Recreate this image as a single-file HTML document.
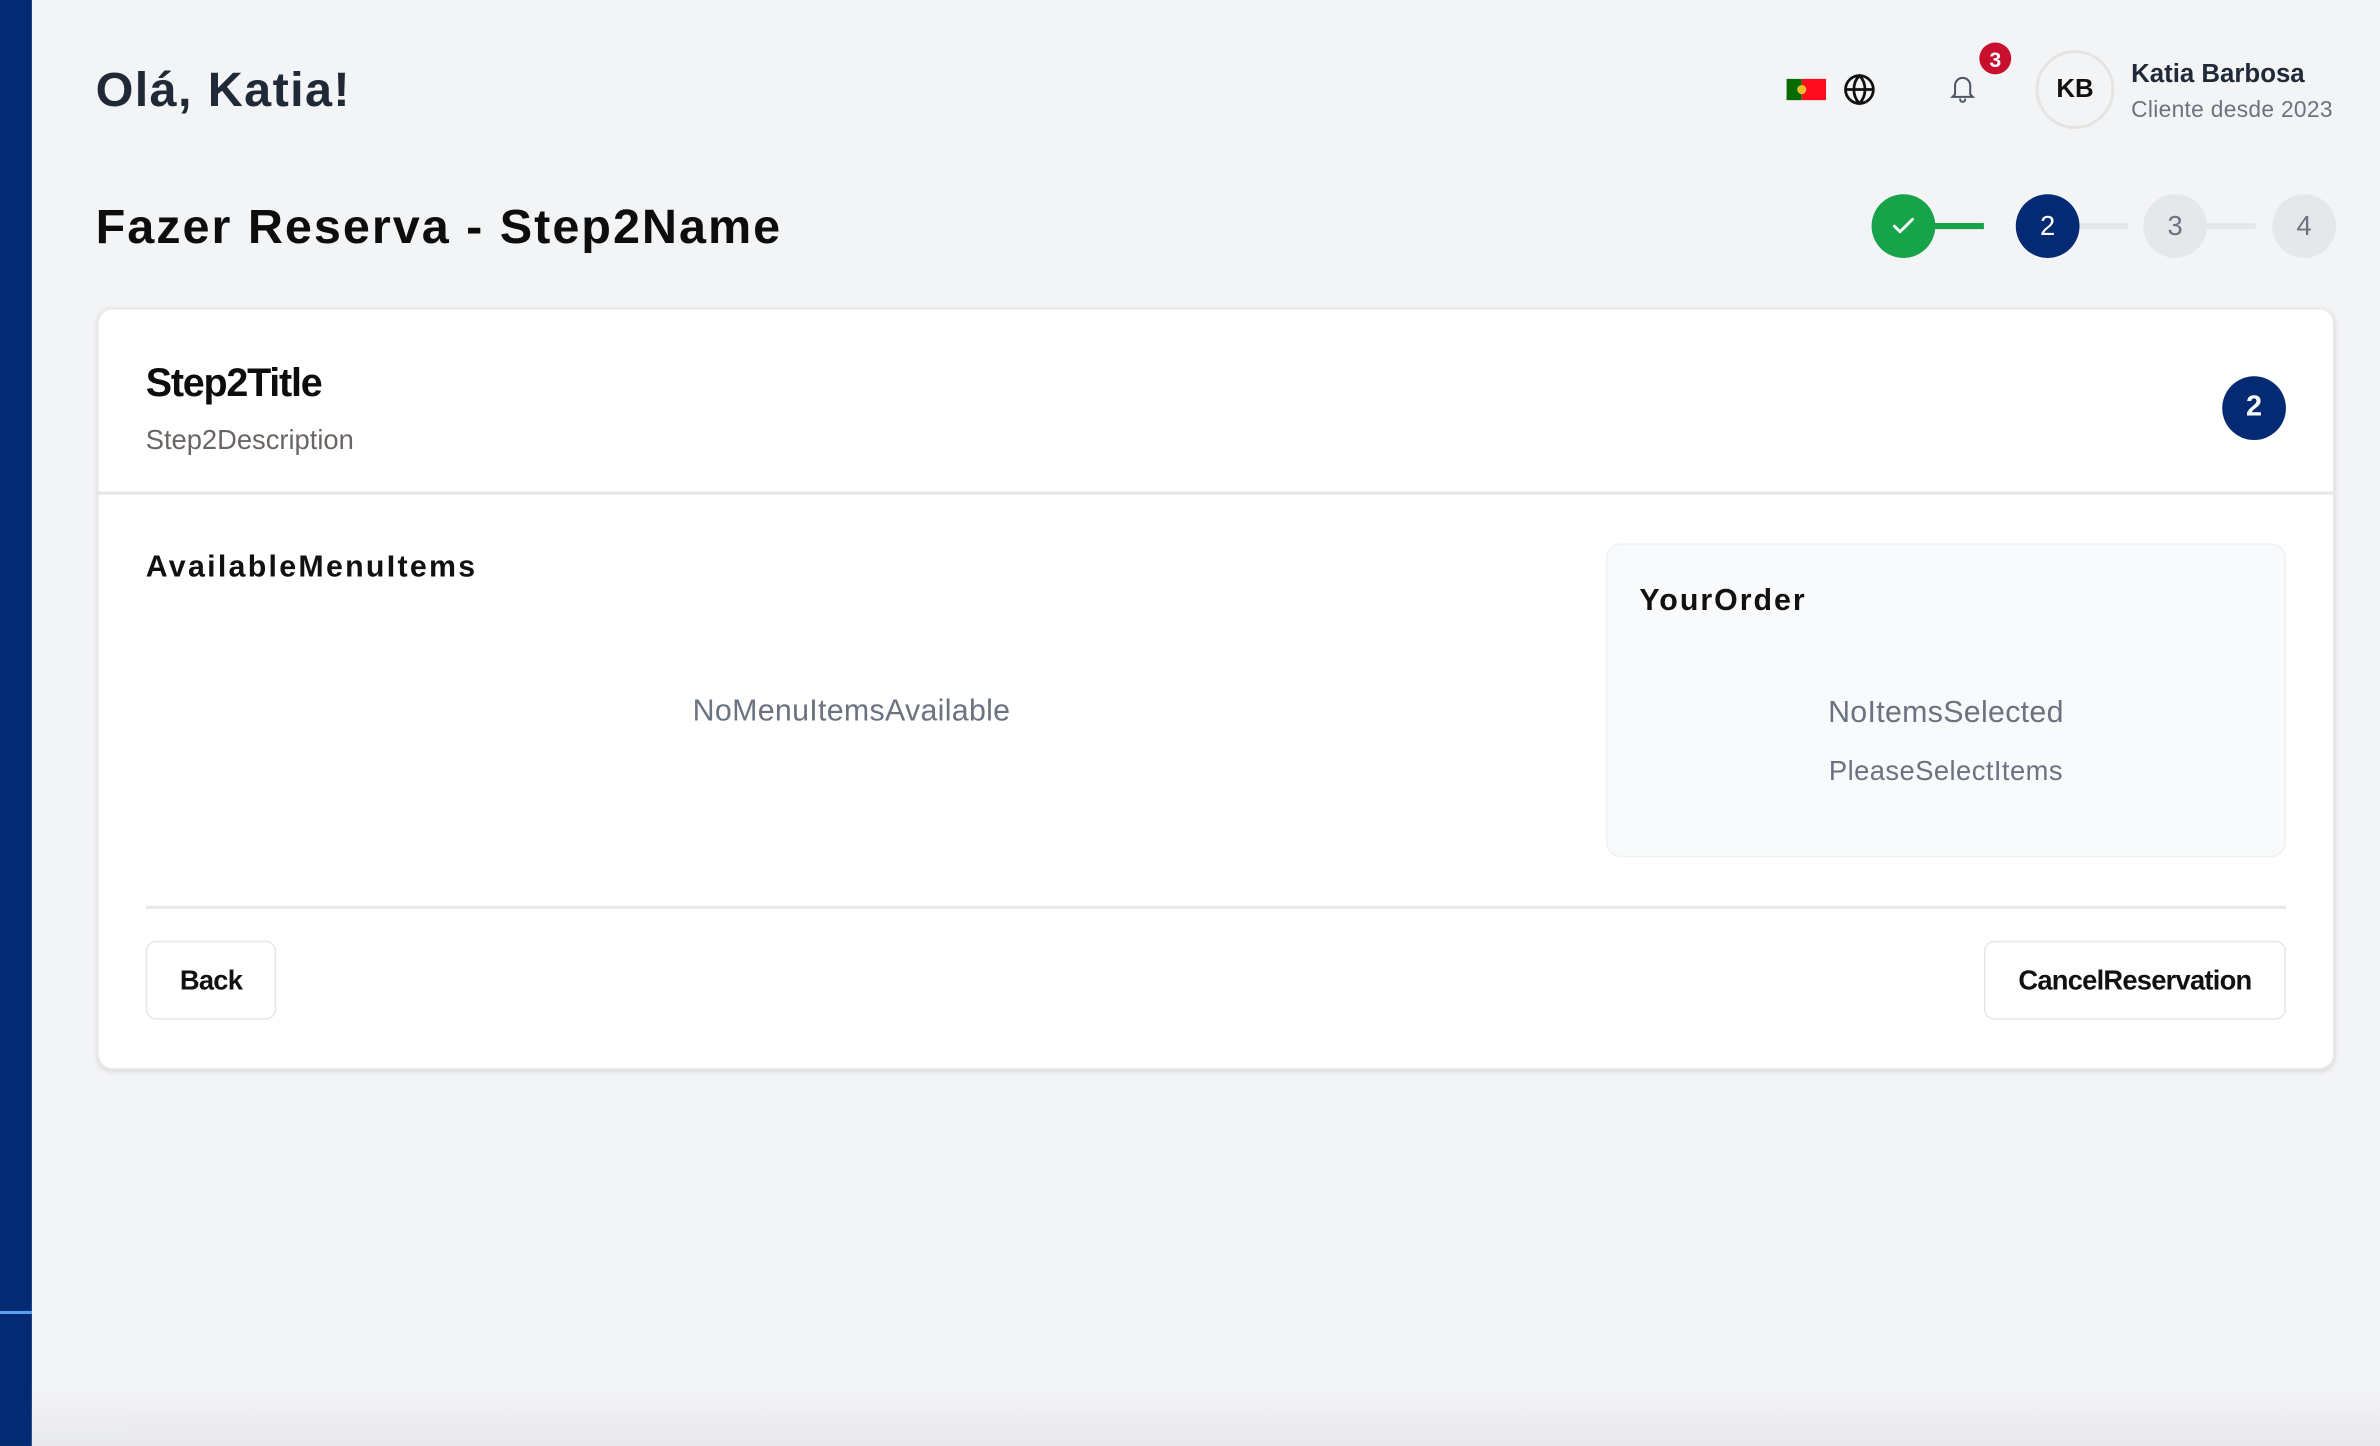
<!DOCTYPE html>
<html><head><meta charset="utf-8"><style>
html,body{margin:0;padding:0;width:2380px;height:1446px;overflow:hidden;background:#f3f4f6;}
#w{position:absolute;left:0;top:0;width:1568px;height:953px;transform:scale(1.5179,1.5173);transform-origin:0 0;font-family:"Liberation Sans",Arial,sans-serif;}
.a{position:absolute;}
.sb{left:0;top:0;width:21px;height:953px;background:#032a73;}
.t{white-space:nowrap;}
.circ{position:absolute;border-radius:50%;display:flex;align-items:center;justify-content:center;}
.btn{position:absolute;background:#fff;border:1.5px solid #e5e7eb;border-radius:7px;display:flex;align-items:center;justify-content:center;font-size:18px;font-weight:bold;color:#111;box-sizing:border-box;letter-spacing:-0.5px}
</style></head><body><div id="w">
<div class="a sb"></div>
<div class="a" style="left:0;top:864px;width:21px;height:2px;background:#5aa2f0"></div>
<div class="a" style="left:21px;top:915px;width:1547px;height:38px;background:linear-gradient(#f3f4f600,#e7e8ea)"></div>

<div class="a t" style="left:63px;top:41px;font-size:32px;font-weight:bold;color:#1f2937;letter-spacing:0.9px">Olá, Katia!</div>

<!-- flag -->
<div class="a" style="left:1177px;top:52px;width:10px;height:14px;background:#066b00"></div>
<div class="a" style="left:1187px;top:52px;width:16px;height:14px;background:#ff0c1f"></div>
<div class="a" style="left:1184px;top:56px;width:6px;height:6px;border-radius:50%;background:#e9c02a"></div>
<svg class="a" style="left:1214px;top:48px" width="22" height="22" viewBox="0 0 24 24" fill="none" stroke="#111" stroke-width="2"><circle cx="12" cy="12" r="10"/><path d="M2 12h20M12 2c3 3 4 6.5 4 10s-1 7-4 10c-3-3-4-6.5-4-10s1-7 4-10z"/></svg>
<svg class="a" style="left:1283px;top:47px" width="20" height="22" viewBox="0 0 24 24" fill="none" stroke="#4b5563" stroke-width="1.6" stroke-linecap="round"><path d="M6 17V10a6 6 0 0 1 12 0v7l2 2H4l2-2z"/><path d="M10 21a2 2 0 0 0 4 0"/></svg>
<div class="circ" style="left:1304px;top:28px;width:21px;height:21px;background:#c8102e;color:#fff;font-size:14px;font-weight:bold">3</div>
<div class="circ" style="left:1341px;top:33px;width:48px;height:48px;border:2px solid #e6e4e1;font-weight:bold;font-size:17px;color:#111">KB</div>
<div class="a t" style="left:1404px;top:39px;font-size:17px;color:#1f2937;font-weight:bold;letter-spacing:0px">Katia Barbosa</div>
<div class="a t" style="left:1404px;top:64px;font-size:15px;color:#6b7280;letter-spacing:0.2px">Cliente desde 2023</div>

<div class="a t" style="left:63px;top:131px;font-size:32px;font-weight:bold;color:#0d0d0d;letter-spacing:1.3px">Fazer Reserva - Step2Name</div>

<!-- stepper -->
<div class="a" style="left:1270px;top:147px;width:37px;height:4px;background:#16a34a"></div>
<div class="a" style="left:1368px;top:147px;width:34px;height:4px;background:#e5e7eb"></div>
<div class="a" style="left:1452px;top:147px;width:34px;height:4px;background:#e5e7eb"></div>
<div class="circ" style="left:1233px;top:128px;width:42px;height:42px;background:#16a34a"><svg width="18" height="18" viewBox="0 0 24 24" fill="none" stroke="#fff" stroke-width="2.5" stroke-linecap="round" stroke-linejoin="round"><path d="M4 12l5 5L20 6"/></svg></div>
<div class="circ" style="left:1328px;top:128px;width:42px;height:42px;background:#032a73;color:#fff;font-size:18px">2</div>
<div class="circ" style="left:1412px;top:128px;width:42px;height:42px;background:#e5e7eb;color:#6b7280;font-size:18px">3</div>
<div class="circ" style="left:1497px;top:128px;width:42px;height:42px;background:#e5e7eb;color:#6b7280;font-size:18px">4</div>

<!-- card -->
<div class="a" style="left:64px;top:203px;width:1474px;height:502px;background:#fff;border-radius:10px;box-shadow:0 1px 4px rgba(0,0,0,.12);border:1px solid #e8e8e8;box-sizing:border-box"></div>
<div class="a" style="left:64px;top:324px;width:1474px;height:1.5px;background:#e5e7eb"></div>
<div class="a t" style="left:96px;top:237px;font-size:26px;font-weight:bold;color:#0d0d0d;letter-spacing:-0.8px">Step2Title</div>
<div class="a t" style="left:96px;top:280px;font-size:18px;color:#6b6663;letter-spacing:0px">Step2Description</div>
<div class="circ" style="left:1464px;top:248px;width:42px;height:42px;background:#032a73;color:#fff;font-size:19px;font-weight:bold">2</div>

<div class="a t" style="left:96px;top:363px;font-size:20px;font-weight:bold;color:#111;letter-spacing:1.5px">AvailableMenuItems</div>
<div class="a t" style="left:361px;width:400px;text-align:center;top:458px;font-size:20px;color:#6b7280;letter-spacing:0.2px">NoMenuItemsAvailable</div>

<div class="a" style="left:1058px;top:358px;width:448px;height:207px;background:#f9fafb;border:1px solid #eef0f2;border-radius:10px;box-sizing:border-box"></div>
<div class="a t" style="left:1080px;top:385px;font-size:20px;font-weight:bold;color:#111;letter-spacing:1.3px">YourOrder</div>
<div class="a t" style="left:1082px;width:400px;text-align:center;top:459px;font-size:20px;color:#6b7280;letter-spacing:0.2px">NoItemsSelected</div>
<div class="a t" style="left:1082px;width:400px;text-align:center;top:498px;font-size:18px;color:#6b7280;letter-spacing:0.3px">PleaseSelectItems</div>

<div class="a" style="left:96px;top:597px;width:1410px;height:1.5px;background:#e5e7eb"></div>
<div class="btn" style="left:96px;top:620px;width:86px;height:52px">Back</div>
<div class="btn" style="left:1307px;top:620px;width:199px;height:52px">CancelReservation</div>
</div></body></html>
